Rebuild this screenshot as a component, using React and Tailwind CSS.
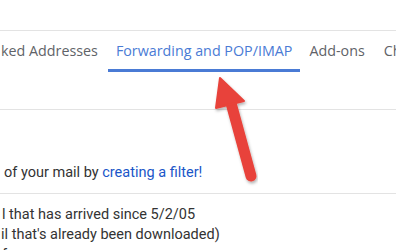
export default function App() {
  const tabFont = { fontFamily: '"Open Sans", "Liberation Sans", sans-serif' };
  return (
    <div className="relative w-[396px] h-[250px] overflow-hidden bg-white" style={{ fontFamily: 'Roboto, "Liberation Sans", Arial, sans-serif' }}>
      <div className="h-[30px]" />
      <div className="border-t border-[#e3e3e3] h-[80px] border-b">
        <div className="flex items-start h-[41px] whitespace-nowrap text-[14.3px] font-medium" style={tabFont}>
          <div className="pl-[1px] pr-[10px] pt-[9px] h-full text-[#5f6368]">ked Addresses</div>
          <div className="relative h-full px-[8px] pt-[9px] text-[#4a7bd5] border-b-[3px] border-[#4a7bd5]">Forwarding and POP/IMAP</div>
          <div className="pl-[9px] pr-[19px] pt-[9px] h-full text-[#5f6368]">Add-ons</div>
          <div className="pt-[9px] h-full text-[#5f6368]">Ch</div>
        </div>
      </div>
      <div className="h-[83px] flex items-end pb-[10px] text-[14.5px] leading-[20px] text-[#333] whitespace-nowrap pl-[4px]">
        of your mail by&nbsp;<span className="text-[#1a56c8]">creating a filter!</span>
      </div>
      <div className="border-t border-[#e3e3e3] pt-[11px] text-[14.5px] leading-[20px] text-[#333] whitespace-nowrap pl-[2px]">
        <div>l that has arrived since 5/2/05</div>
        <div className="-ml-[1px]">il that's already been downloaded)</div>
        <div>f</div>
      </div>
      <svg className="absolute left-0 top-0" width="396" height="250" viewBox="0 0 396 250">
        <defs>
          <filter id="sh" x="-20%" y="-20%" width="140%" height="140%">
            <feDropShadow dx="1" dy="2" stdDeviation="1.5" floodColor="#000" floodOpacity="0.3" />
          </filter>
        </defs>
        <g filter="url(#sh)">
          <line x1="231" y1="103" x2="251" y2="176" stroke="#e8433a" strokeWidth="11" strokeLinecap="round" />
          <polygon points="220,78 216,108 244,101" fill="#e8433a" stroke="#e8433a" strokeWidth="2" strokeLinejoin="round" />
        </g>
      </svg>
    </div>
  );
}
